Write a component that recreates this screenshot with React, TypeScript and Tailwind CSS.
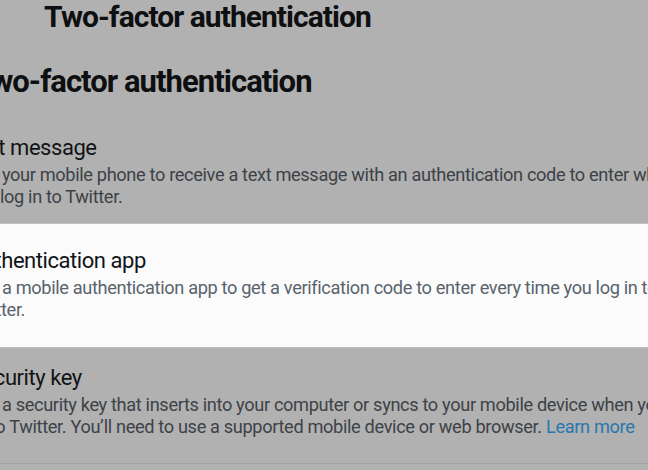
import React from 'react';

type Option = {
  title: string;
  titleClass: string;
  lines: React.ReactNode[];
};

const options: Option[] = [
  {
    title: 'Text message',
    titleClass: '-ml-[3px]',
    lines: [
      'Use your mobile phone to receive a text message with an authentication code to enter when you',
      'you log in to Twitter.',
    ],
  },
  {
    title: 'Authentication app',
    titleClass: 'ml-[1px]',
    lines: [
      'Use a mobile authentication app to get a verification code to enter every time you log in to',
      'Twitter.',
    ],
  },
  {
    title: 'Security key',
    titleClass: 'ml-[2px]',
    lines: [
      'Use a security key that inserts into your computer or syncs to your mobile device when you log in',
      <span className="ml-[4px]">
        in to Twitter. You’ll need to use a supported mobile device or web browser.{' '}
        <a href="#" className="text-[#2a77ad]">Learn more</a>
      </span>,
    ],
  },
];

const OptionRow: React.FC<{ option: Option; active?: boolean; className?: string }> = ({
  option,
  active,
  className,
}) => (
  <div className={`-ml-[32px] ${className ?? ''}`}>
    <div
      className={`${option.titleClass} h-[26px] leading-[26px] whitespace-nowrap text-[22px] tracking-[-0.45px] ${
        active ? 'text-[#0f1419]' : 'text-[#121416]'
      }`}
    >
      {option.title}
    </div>
    <div
      className={`mt-[3px] text-[18.2px] leading-[22px] tracking-[-0.35px] whitespace-nowrap ${
        active ? 'text-[#59636d]' : 'text-[#3d4247]'
      }`}
    >
      {option.lines.map((line, i) => (
        <div key={i}>{line}</div>
      ))}
    </div>
  </div>
);

export default function App() {
  return (
    <div
      className="w-[648px] h-[470px] overflow-hidden bg-[#b1b1b1]"
      style={{ fontFamily: 'Roboto, "Liberation Sans", sans-serif' }}
    >
      <h1 className="ml-[44px] h-[34px] leading-[34px] text-[30px] font-bold tracking-[-0.95px] text-[#0e0f10] whitespace-nowrap">
        Two-factor authentication
      </h1>
      <h2 className="mt-[31px] -ml-[27px] h-[34px] leading-[34px] text-[31px] font-bold tracking-[-0.95px] text-[#0e0f10] whitespace-nowrap">
        Two-factor authentication
      </h2>

      <OptionRow option={options[0]} className="mt-[36px] pb-[15px]" />

      <div className="border-t border-[#c2c2c2] bg-[#fbfbfb] pt-[24px] pb-[26px]">
        <OptionRow option={options[1]} active />
      </div>

      <div className="border-t border-[#bdbdbd] pt-[17px] pb-[25px] border-b border-b-[#a4a4a4]">
        <OptionRow option={options[2]} />
      </div>
    </div>
  );
}
